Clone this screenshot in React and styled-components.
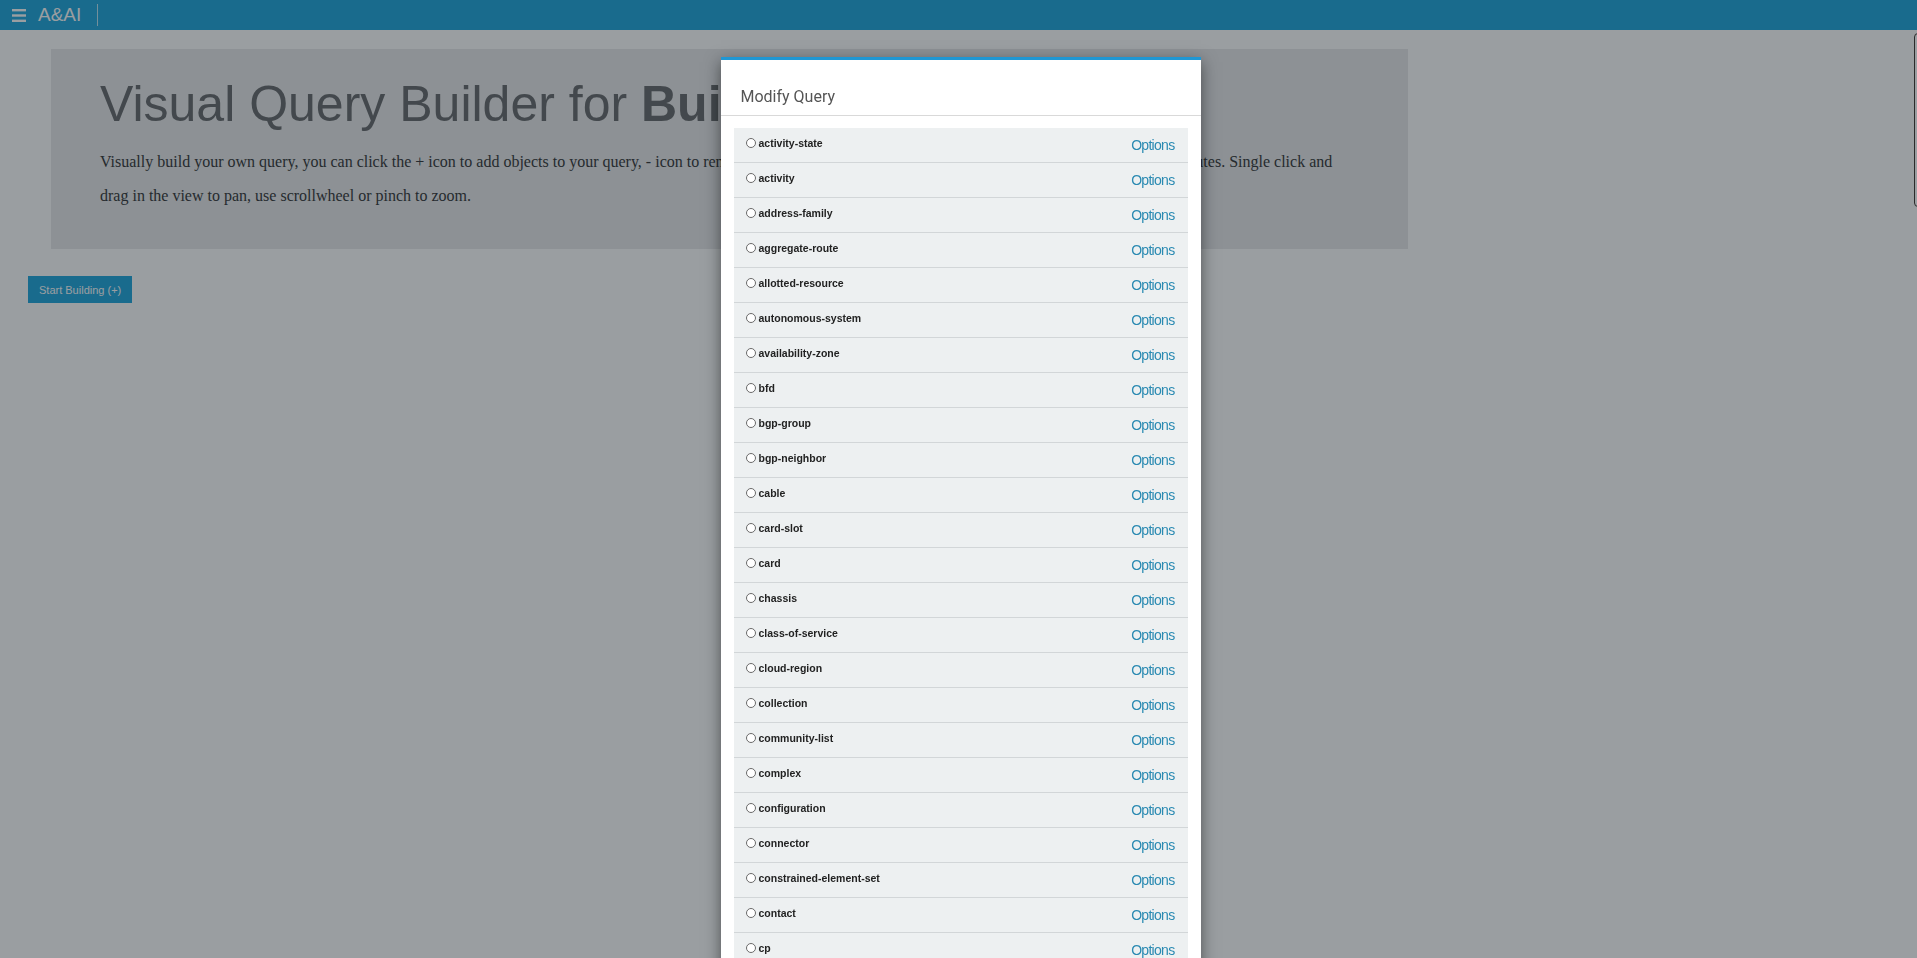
import React from 'react';
import styled, { createGlobalStyle } from 'styled-components';

const GlobalStyle = createGlobalStyle`
	html, body {
		margin: 0;
		height: 100%;
		overflow: hidden;
		background: #ffffff;
		font-family: "Liberation Sans", Arial, sans-serif;
	}
	* {
		box-sizing: border-box;
	}
`;

const NavBar = styled.header`
	height: 30px;
	background: #29aade;
	display: flex;
	align-items: center;
	padding: 0 12px;
	color: #ffffff;
`;

const Brand = styled.span`
	font-size: 19px;
	margin-left: 12px;
	line-height: 30px;
`;

const NavDivider = styled.span`
	width: 1px;
	height: 22px;
	background: rgba(255, 255, 255, 0.7);
	margin-left: 16px;
`;

const Main = styled.main`
	padding: 19px 0 0 28px;
`;

const Jumbotron = styled.section`
	width: 1357px;
	margin-left: 23px;
	background: #e9e9eb;
	padding: 27px 49px 36px 49px;
`;

const Heading = styled.h1`
	margin: 0 0 12px;
	font-size: 50px;
	line-height: 57px;
	font-weight: normal;
	color: #6f7173;

	b {
		font-weight: bold;
	}
`;

const Lead = styled.p`
	margin: 0;
	font-family: "Liberation Serif", "Times New Roman", serif;
	font-size: 16px;
	line-height: 34px;
	color: #3d3f41;
`;

const StartButton = styled.button`
	margin-top: 27px;
	height: 27px;
	padding: 0 11px;
	border: none;
	background: #29aade;
	color: #ffffff;
	font-family: "Liberation Sans", Arial, sans-serif;
	font-size: 11px;
	cursor: pointer;
`;

const Backdrop = styled.div`
	position: fixed;
	inset: 0;
	background: rgba(3, 13, 20, 0.4);
`;

const ScrollThumb = styled.div`
	position: fixed;
	top: 33px;
	left: 1914px;
	width: 10px;
	height: 174px;
	border: 1px solid #2b2b2b;
	border-radius: 4px;
`;

const ModalLayer = styled.div`
	position: fixed;
	inset: 0;
	display: flex;
	justify-content: center;
	align-items: flex-start;
	padding: 57px 0 0 4px;
`;

const Modal = styled.div`
	width: 480px;
	background: #ffffff;
	border-top: 3px solid #1f97d4;
	box-shadow: 0 5px 15px rgba(0, 0, 0, 0.5);
`;

const ModalHeader = styled.div`
	padding: 26px 20px 7px;
	border-bottom: 1px solid #d9d9d9;
`;

const ModalTitle = styled.h4`
	margin: 0;
	font-family: Roboto, "Liberation Sans", sans-serif;
	font-size: 16px;
	line-height: 22px;
	font-weight: normal;
	color: #555555;
`;

const ModalBody = styled.div`
	padding: 12px 13px;
`;

const List = styled.ul`
	list-style: none;
	margin: 0;
	padding: 0;
	background: #edf0f1;
`;

const Row = styled.li`
	height: 35px;
	display: flex;
	align-items: flex-start;
	padding: 9px 13px 0 12px;
	border-bottom: 1px solid #d2d6d8;
`;

const Radio = styled.span`
	width: 10px;
	height: 10px;
	margin-top: 1px;
	border: 1px solid #6a6a6a;
	border-radius: 50%;
	background: #ffffff;
	flex-shrink: 0;
`;

const Label = styled.span`
	margin-left: 3px;
	font-size: 10.5px;
	font-weight: bold;
	line-height: 12px;
	color: #222222;
`;

const OptionsLink = styled.a`
	margin-left: auto;
	font-size: 14px;
	letter-spacing: -0.7px;
	line-height: 16px;
	color: #2a8ab2;
	text-decoration: none;
	cursor: pointer;
`;

const nodeTypes = [
	'activity-state',
	'activity',
	'address-family',
	'aggregate-route',
	'allotted-resource',
	'autonomous-system',
	'availability-zone',
	'bfd',
	'bgp-group',
	'bgp-neighbor',
	'cable',
	'card-slot',
	'card',
	'chassis',
	'class-of-service',
	'cloud-region',
	'collection',
	'community-list',
	'complex',
	'configuration',
	'connector',
	'constrained-element-set',
	'contact',
	'cp',
	'ctag-assignment',
	'ctag-pool',
	'customer',
];

const MenuIcon = () => (
	<svg width="14" height="13" viewBox="0 0 14 13">
		<rect x="0" y="0" width="14" height="2.4" fill="currentColor" />
		<rect x="0" y="5.3" width="14" height="2.4" fill="currentColor" />
		<rect x="0" y="10.6" width="14" height="2.4" fill="currentColor" />
	</svg>
);

export default function App() {
	return (
		<>
			<GlobalStyle />
			<NavBar>
				<MenuIcon />
				<Brand>A&amp;AI</Brand>
				<NavDivider />
			</NavBar>
			<Main>
				<Jumbotron>
					<Heading>
						Visual Query Builder for <b>Building</b> Queries
					</Heading>
					<Lead>
						Visually build your own query, you can click the + icon to add objects to your query, - icon to
						remove objects from your query, or the magnifying glass to filter on its attributes. Single click
						and drag in the view to pan, use scrollwheel or pinch to zoom.
					</Lead>
				</Jumbotron>
				<StartButton>Start Building (+)</StartButton>
			</Main>
			<Backdrop />
			<ScrollThumb />
			<ModalLayer>
				<Modal>
					<ModalHeader>
						<ModalTitle>Modify Query</ModalTitle>
					</ModalHeader>
					<ModalBody>
						<List>
							{nodeTypes.map((type) => (
								<Row key={type}>
									<Radio />
									<Label>{type}</Label>
									<OptionsLink>Options</OptionsLink>
								</Row>
							))}
						</List>
					</ModalBody>
				</Modal>
			</ModalLayer>
		</>
	);
}
